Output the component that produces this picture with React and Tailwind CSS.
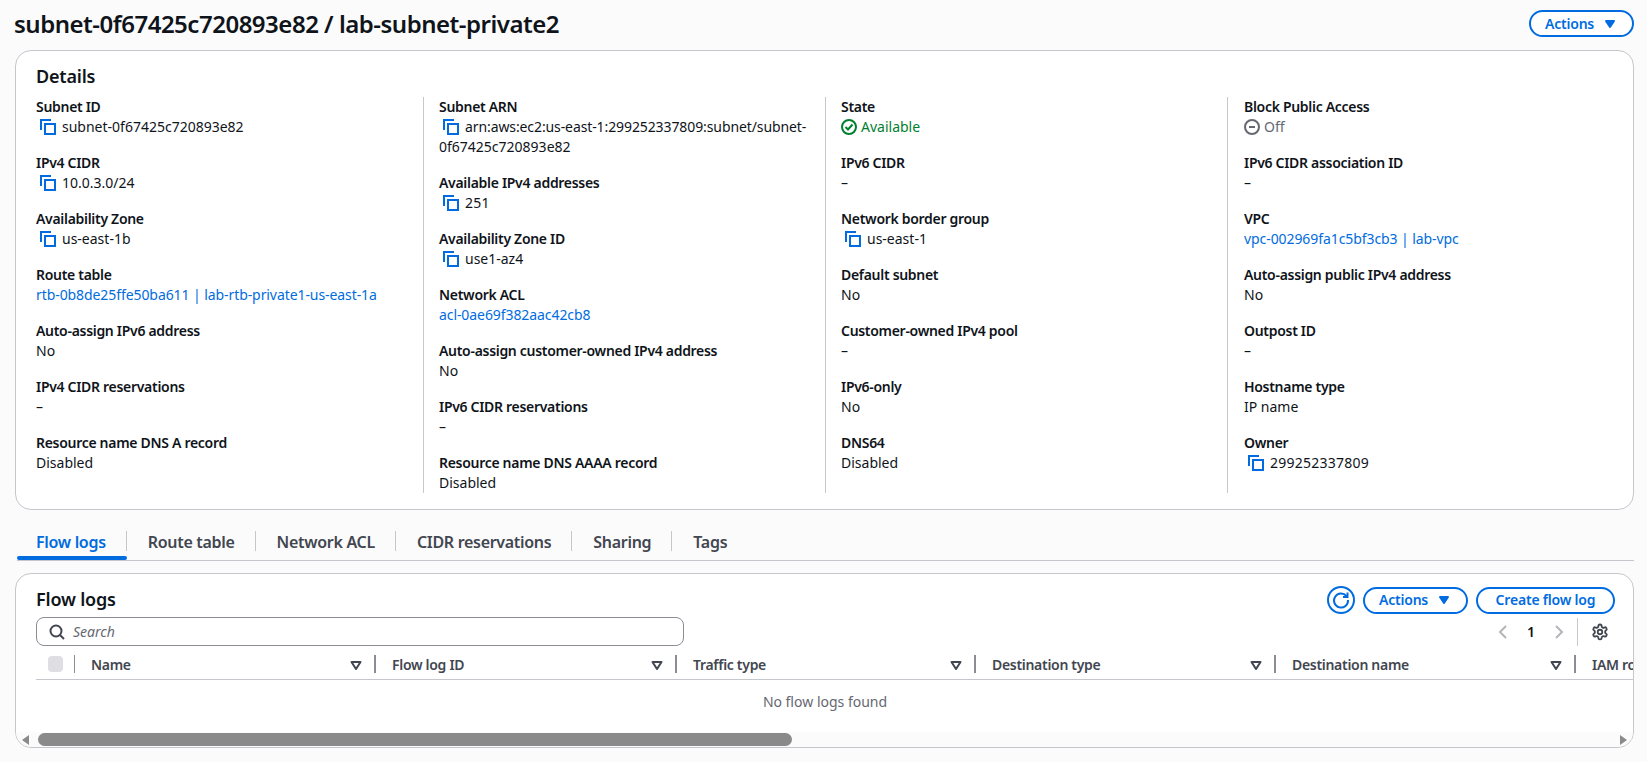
import React from "react";

const font = { fontFamily: '"Noto Sans", "Open Sans", sans-serif' };

function CopyIcon() {
  return (
    <svg viewBox="0 0 16 16" className="w-4 h-4 shrink-0" fill="none" stroke="#006ce0" strokeWidth="2">
      <path d="M1 11V1h10" />
      <rect x="5" y="5" width="10" height="10" />
    </svg>
  );
}

function Caret() {
  return (
    <svg viewBox="0 0 16 16" className="w-4 h-4" fill="#006ce0" stroke="#006ce0" strokeWidth="2" strokeLinejoin="round">
      <path d="M4 5h8l-4 6z" />
    </svg>
  );
}

function SortIcon() {
  return (
    <svg viewBox="0 0 16 16" className="w-4 h-4 shrink-0" fill="none" stroke="#424650" strokeWidth="2" strokeLinejoin="round">
      <path d="M3.5 5h9L8 12z" />
    </svg>
  );
}

function Field({ label, children }) {
  return (
    <div className="mb-4 last:mb-0">
      <div className="text-sm font-semibold tracking-[-0.3px] leading-5 text-[#0f141a]">{label}</div>
      <div className="text-sm leading-5 text-[#0f141a]">{children}</div>
    </div>
  );
}

function Copy({ children, wide }) {
  return (
    <div className="flex items-center pl-1 gap-1.5">
      <CopyIcon />
      <span className={wide ? "tracking-[0.25px]" : ""}>{children}</span>
    </div>
  );
}

function A({ children }) {
  return <span className="text-[#006ce0] tracking-[-0.08px]">{children}</span>;
}

function Button({ children, caret, className }) {
  return (
    <button
      type="button"
      className={
        "h-[27px] rounded-full border-2 border-[#006ce0] flex items-center justify-center text-sm font-semibold tracking-[-0.2px] text-[#006ce0] bg-white " +
        className
      }
    >
      {children}
      {caret && (
        <span className="ml-2">
          <Caret />
        </span>
      )}
    </button>
  );
}

function Tab({ children, active, last }) {
  return (
    <div className={"relative h-[44px] flex items-center pt-2 " + (active ? "pl-[19px] pr-[21px]" : "px-[21px]")}>
      <span className={"text-base font-semibold tracking-[-0.3px] " + (active ? "text-[#006ce0]" : "text-[#424650]")}>{children}</span>
      {!last && <span className="absolute right-0 top-[15px] h-5 w-px bg-[#c6c6cd]" />}
      {active && <span className="absolute left-0 right-0 bottom-0 h-1 rounded-full bg-[#006ce0]" />}
    </div>
  );
}

function Th({ children, width }) {
  return (
    <div className={"flex items-center shrink-0 pl-4 pr-[10px] justify-between " + width}>
      <span className="text-sm font-semibold tracking-[-0.3px] text-[#424650]">{children}</span>
      <SortIcon />
    </div>
  );
}

function HeadSep() {
  return <span className="w-0.5 h-[18px] bg-[#8c8c94] shrink-0" />;
}

export default function App() {
  return (
    <div style={font} className="w-[1647px] h-[762px] overflow-hidden bg-[#fbfbfb] pl-[15px] pr-[13px] text-[#0f141a]">
      <div className="flex items-center justify-between h-[50px] pb-[3px]">
        <h1 className="text-2xl font-semibold tracking-[-0.49px] -ml-px">subnet-0f67425c720893e82 / lab-subnet-private2</h1>
        <Button caret className="w-[105px]">
          Actions
        </Button>
      </div>

      <section className="h-[460px] rounded-2xl border border-[#c6c6cd] bg-white px-5 pt-[13px]">
        <h2 className="text-lg font-semibold tracking-[-0.2px] leading-6 mb-[9px]">Details</h2>
        <div className="flex">
          <div className="w-[387px]">
            <Field label="Subnet ID"><Copy>subnet-0f67425c720893e82</Copy></Field>
            <Field label="IPv4 CIDR"><Copy>10.0.3.0/24</Copy></Field>
            <Field label="Availability Zone"><Copy>us-east-1b</Copy></Field>
            <Field label="Route table"><A>rtb-0b8de25ffe50ba611 | lab-rtb-private1-us-east-1a</A></Field>
            <Field label="Auto-assign IPv6 address">No</Field>
            <Field label="IPv4 CIDR reservations">–</Field>
            <Field label="Resource name DNS A record">Disabled</Field>
          </div>
          <div className="w-[402px] border-l border-[#c6c6cd] pl-[15px]">
            <Field label="Subnet ARN">
              <div className="pl-1 tracking-[-0.1px]">
                <span className="inline-block align-[-3px] mr-1.5"><CopyIcon /></span>
                arn:aws:ec2:us-east-1:299252337809:subnet/subnet-
              </div>
              <div>0f67425c720893e82</div>
            </Field>
            <Field label="Available IPv4 addresses"><Copy wide>251</Copy></Field>
            <Field label="Availability Zone ID"><Copy>use1-az4</Copy></Field>
            <Field label="Network ACL"><A>acl-0ae69f382aac42cb8</A></Field>
            <Field label="Auto-assign customer-owned IPv4 address">No</Field>
            <Field label="IPv6 CIDR reservations">–</Field>
            <Field label="Resource name DNS AAAA record">Disabled</Field>
          </div>
          <div className="w-[402px] border-l border-[#c6c6cd] pl-[15px]">
            <Field label="State">
              <span className="flex items-center gap-1 text-[#00802f]">
                <svg viewBox="0 0 16 16" className="w-4 h-4" fill="none" stroke="#00802f" strokeWidth="2">
                  <circle cx="8" cy="8" r="7" />
                  <path d="M4.5 8l2.5 2.5 4.5-5" />
                </svg>
                Available
              </span>
            </Field>
            <Field label="IPv6 CIDR">–</Field>
            <Field label="Network border group"><Copy>us-east-1</Copy></Field>
            <Field label="Default subnet">No</Field>
            <Field label="Customer-owned IPv4 pool">–</Field>
            <Field label="IPv6-only">No</Field>
            <Field label="DNS64">Disabled</Field>
          </div>
          <div className="w-[370px] border-l border-[#c6c6cd] pl-4">
            <Field label="Block Public Access">
              <span className="flex items-center gap-1 text-[#656871]">
                <svg viewBox="0 0 16 16" className="w-4 h-4" fill="none" stroke="#656871" strokeWidth="2">
                  <circle cx="8" cy="8" r="7" />
                  <path d="M5 8h6" />
                </svg>
                Off
              </span>
            </Field>
            <Field label="IPv6 CIDR association ID">–</Field>
            <Field label="VPC"><A>vpc-002969fa1c5bf3cb3 | lab-vpc</A></Field>
            <Field label="Auto-assign public IPv4 address">No</Field>
            <Field label="Outpost ID">–</Field>
            <Field label="Hostname type">IP name</Field>
            <Field label="Owner"><Copy wide>299252337809</Copy></Field>
          </div>
        </div>
      </section>

      <div className="flex mt-[6px] border-b border-[#c6c6cd] ml-0.5 h-[45px]">
        <Tab active>Flow logs</Tab>
        <Tab>Route table</Tab>
        <Tab>Network ACL</Tab>
        <Tab>CIDR reservations</Tab>
        <Tab>Sharing</Tab>
        <Tab last>Tags</Tab>
      </div>

      <section className="relative mt-[12px] h-[175px] rounded-2xl border border-[#c6c6cd] bg-white overflow-hidden">
        <div className="flex items-center justify-between pl-5 pr-[18px] pt-3">
          <h2 className="text-lg font-semibold tracking-[-0.2px] leading-6 mb-0.5">Flow logs</h2>
          <div className="flex items-center gap-2">
            <svg viewBox="0 0 28 28" className="w-7 h-7" fill="none" stroke="#006ce0" strokeWidth="2">
              <circle cx="14" cy="14" r="13" />
              <path d="M19.5 10.2A7 7 0 1 0 21 14" />
              <path d="M20.5 6.5v4.5H16" />
            </svg>
            <Button caret className="w-[105px]">Actions</Button>
            <Button className="w-[139px]">Create flow log</Button>
          </div>
        </div>

        <div className="flex items-center justify-between pl-5 pr-[18px] mt-[3px] h-[29px]">
          <div className="w-[648px] h-[29px] rounded-lg border border-[#8c8c94] flex items-center px-3 gap-2 bg-white">
            <svg viewBox="0 0 16 16" className="w-4 h-4" fill="none" stroke="#424650" strokeWidth="2">
              <circle cx="7" cy="7" r="5.5" />
              <path d="M11 11l4 4" />
            </svg>
            <span className="text-sm italic text-[#656871]">Search</span>
          </div>
          <div className="flex items-center text-[#b4b4bb]">
            <svg viewBox="0 0 16 16" className="w-4 h-4" fill="none" stroke="#b4b4bb" strokeWidth="2">
              <path d="M11 2L5 8l6 6" />
            </svg>
            <span className="w-[40px] text-center text-sm font-semibold text-[#0f141a]">1</span>
            <svg viewBox="0 0 16 16" className="w-4 h-4" fill="none" stroke="#b4b4bb" strokeWidth="2">
              <path d="M5 2l6 6-6 6" />
            </svg>
            <span className="w-px h-7 bg-[#c6c6cd] ml-2.5 mr-[13px]" />
            <svg viewBox="0 0 24 24" className="w-[18px] h-[18px] mr-[6px]" fill="none" stroke="#424650" strokeWidth="2.4" strokeLinejoin="round">
              <path d="M12.2 2h-.4a2 2 0 0 0-2 2v.2a2 2 0 0 1-1 1.7l-.4.3a2 2 0 0 1-2 0l-.2-.1a2 2 0 0 0-2.7.7l-.2.4a2 2 0 0 0 .7 2.7l.2.1a2 2 0 0 1 1 1.7v.5a2 2 0 0 1-1 1.7l-.2.1a2 2 0 0 0-.7 2.7l.2.4a2 2 0 0 0 2.7.7l.2-.1a2 2 0 0 1 2 0l.4.3a2 2 0 0 1 1 1.7v.2a2 2 0 0 0 2 2h.4a2 2 0 0 0 2-2v-.2a2 2 0 0 1 1-1.7l.4-.3a2 2 0 0 1 2 0l.2.1a2 2 0 0 0 2.7-.7l.2-.4a2 2 0 0 0-.7-2.7l-.2-.1a2 2 0 0 1-1-1.7v-.5a2 2 0 0 1 1-1.7l.2-.1a2 2 0 0 0 .7-2.7l-.2-.4a2 2 0 0 0-2.7-.7l-.2.1a2 2 0 0 1-2 0l-.4-.3a2 2 0 0 1-1-1.7V4a2 2 0 0 0-2-2z" />
              <circle cx="12" cy="12" r="3" />
            </svg>
          </div>
        </div>

        <div className="ml-5 mt-[9px] overflow-hidden border-b border-[#c6c6cd] h-[25px]">
          <div className="flex items-start w-[1800px]">
            <div className="w-[39px] flex items-center shrink-0">
              <span className="ml-3 w-4 h-4 rounded bg-[#dedee3]" />
              <span className="ml-[11px] w-px h-[18px] bg-[#8c8c94]" />
            </div>
            <Th width="w-[299px]">Name</Th>
            <HeadSep />
            <Th width="w-[299px]">Flow log ID</Th>
            <HeadSep />
            <Th width="w-[297px]">Traffic type</Th>
            <HeadSep />
            <Th width="w-[298px]">Destination type</Th>
            <HeadSep />
            <Th width="w-[298px]">Destination name</Th>
            <HeadSep />
            <Th width="w-[300px]">IAM role</Th>
          </div>
        </div>

        <div className="h-[53px] pt-3 text-center text-sm text-[#656871] ml-[1px]">No flow logs found</div>

        <div className="absolute left-0 right-0 bottom-0 h-[15px] bg-[#fbfbfb] flex items-center">
          <svg viewBox="0 0 8 10" className="w-2 h-2.5 ml-[6px]" fill="#8a8a8a">
            <path d="M7 0v10L0 5z" />
          </svg>
          <span className="ml-[8px] w-[754px] h-[13px] rounded-full bg-[#8a8a8a]" />
          <svg viewBox="0 0 8 10" className="w-2 h-2.5 ml-auto mr-[6px]" fill="#8a8a8a">
            <path d="M1 0v10l7-5z" />
          </svg>
        </div>
      </section>
    </div>
  );
}
